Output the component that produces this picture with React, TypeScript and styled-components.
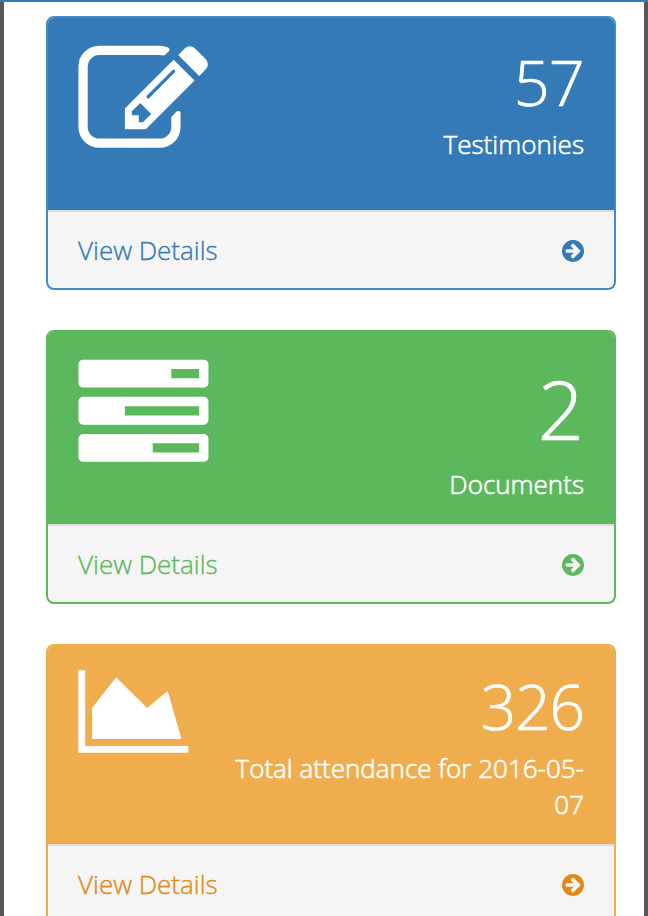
import React from "react";
import styled, { createGlobalStyle } from "styled-components";

const GlobalStyle = createGlobalStyle`
  *, *::before, *::after { box-sizing: border-box; }
  body { margin: 0; background: #fff; overflow: hidden; }
`;

const Page = styled.main`
  height: 916px;
  overflow: hidden;
  padding: 14px 32px 0 46px;
  border-top: 2px solid #337ab7;
  background: linear-gradient(90deg, #55555b 4px, #fff 4px, #fff 644px, #55555b 644px);
  display: flex;
  flex-direction: column;
  gap: 40px;
  font-family: "Open Sans", sans-serif;
  font-weight: 300;
  font-size: 26px;
  line-height: 36px;
`;

const Panel = styled.section<{ $border: string }>`
  flex: none;
  border: 2px solid ${(p) => p.$border};
  border-radius: 8px;
  background: #f5f5f5;
  overflow: hidden;
`;

const Heading = styled.header<{ $fill: string; $height: number }>`
  height: ${(p) => p.$height}px;
  padding: 0 30px;
  display: flex;
  justify-content: space-between;
  align-items: flex-start;
  color: #fff;
  background: ${(p) => p.$fill};
`;

const Glyph = styled.svg<{ $width: number; $height: number; $top: number }>`
  flex: none;
  display: block;
  width: ${(p) => p.$width}px;
  height: ${(p) => p.$height}px;
  margin-top: ${(p) => p.$top}px;
  overflow: visible;
  fill: currentColor;
`;

const Summary = styled.div<{ $top: number }>`
  width: 360px;
  padding-top: ${(p) => p.$top}px;
  text-align: right;
`;

const Count = styled.div<{ $size: number; $line: number; $tighten: number }>`
  font-size: ${(p) => p.$size}px;
  line-height: ${(p) => p.$line}px;
  letter-spacing: -${(p) => p.$tighten}px;
  -webkit-text-stroke: 0.7px currentColor;
`;

const Label = styled.div`
  -webkit-text-stroke: 0.6px currentColor;
`;

const Footer = styled.footer<{ $color: string }>`
  height: 78px;
  padding: 0 30px;
  border-top: 2px solid #ddd;
  display: flex;
  justify-content: space-between;
  align-items: center;
  color: ${(p) => p.$color};
  -webkit-text-stroke: 0.35px currentColor;
`;

const Arrow = styled.svg`
  display: block;
  width: 22px;
  height: 22px;
  margin-top: 2px;
  overflow: visible;
  fill: currentColor;
`;

const icons = {
  edit: {
    box: "-6 -6 1792 1792",
    path: "M888 1184l116-116-152-152-116 116v56h96v96h56zm440-720q-16-16-33 1l-350 350q-17 17-1 33t33-1l350-350q17-17 1-33zm80 594v190q0 119-84.5 203.5t-203.5 84.5h-832q-119 0-203.5-84.5t-84.5-203.5v-832q0-119 84.5-203.5t203.5-84.5h832q63 0 117 25 15 7 18 23 3 17-9 29l-49 49q-14 14-32 8-23-6-45-6h-832q-66 0-113 47t-47 113v832q0 66 47 113t113 47h832q66 0 113-47t47-113v-126q0-13 9-22l64-64q15-15 35-7t20 29zm-96-738l288 288-672 672h-288v-288zm444 132l-92 92-288-288 92-92q28-28 68-28t68 28l152 152q28 28 28 68t-28 68z",
  },
  tasks: {
    box: "-6 -6 1792 1792",
    path: "M1024 1408h640v-128h-640v128zm-384-512h1024v-128h-1024v128zm640-512h384v-128h-384v128zm512 832v256q0 26-19 45t-45 19h-1664q-26 0-45-19t-19-45v-256q0-26 19-45t45-19h1664q26 0 45 19t19 45zm0-512v256q0 26-19 45t-45 19h-1664q-26 0-45-19t-19-45v-256q0-26 19-45t45-19h1664q26 0 45 19t19 45zm0-512v256q0 26-19 45t-45 19h-1664q-26 0-45-19t-19-45v-256q0-26 19-45t45-19h1664q26 0 45 19t19 45z",
  },
  area: {
    box: "-6 -7 2048 1792",
    path: "M2048 1536v128h-2048v-1536h128v1408h1920zm-384-1024l256 896h-1664v-576l448-576 576 576z",
  },
};

const arrowPath =
  "M1413 896q0-27-18-45l-91-91-362-362q-18-18-45-18t-45 18l-91 91q-18 18-18 45t18 45l189 189h-502q-26 0-45 19t-19 45v128q0 26 19 45t45 19h502l-189 189q-19 19-19 45t19 45l91 91q18 18 45 18t45-18l362-362 91-91q18-18 18-45zm251 0q0 209-103 385.5t-279.5 279.5-385.5 103-385.5-103-279.5-279.5-103-385.5 103-385.5 279.5-279.5 385.5-103 385.5 103 279.5 279.5 103 385.5z";

const panels = [
  { icon: icons.edit, iconW: 130, iconH: 130, iconTop: 18, count: "57", size: 63, line: 88, top: 20, tighten: 0.8, label: "Testimonies", fill: "#337ab7", border: "#428bca", link: "#337ab7", height: 192 },
  { icon: icons.tasks, iconW: 130, iconH: 130, iconTop: 18, count: "2", size: 81, line: 114, top: 20, tighten: 0, label: "Documents", fill: "#5cb85c", border: "#5cb85c", link: "#5cb85c", height: 192 },
  { icon: icons.area, iconW: 110, iconH: 96.25, iconTop: 17, count: "326", size: 62, line: 88, top: 16, tighten: 1, label: "Total attendance for 2016-05-07", fill: "#f0ad4e", border: "#f0ad4e", link: "#df8a13", height: 198 },
];

export default function App() {
  return (
    <>
      <GlobalStyle />
      <Page>
        {panels.map((p) => (
          <Panel key={p.label} $border={p.border}>
            <Heading $fill={p.fill} $height={p.height}>
              <Glyph viewBox={p.icon.box} $width={p.iconW} $height={p.iconH} $top={p.iconTop} aria-hidden="true">
                <path d={p.icon.path} />
              </Glyph>
              <Summary $top={p.top}>
                <Count $size={p.size} $line={p.line} $tighten={p.tighten}>{p.count}</Count>
                <Label>{p.label}</Label>
              </Summary>
            </Heading>
            <Footer $color={p.link}>
              <span>View Details</span>
              <Arrow viewBox="128 128 1536 1536" aria-hidden="true">
                <path d={arrowPath} />
              </Arrow>
            </Footer>
          </Panel>
        ))}
      </Page>
    </>
  );
}
